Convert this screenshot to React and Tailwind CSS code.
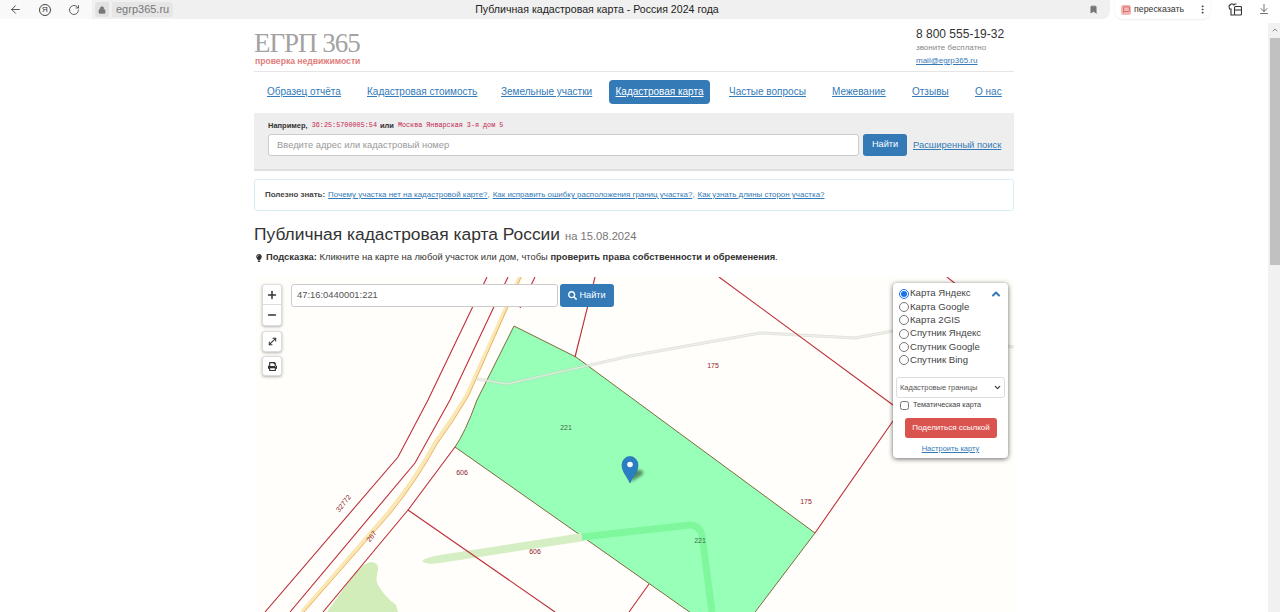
import { ArrowLeft, RotateCw, Lock, Bookmark, ArrowDownToLine, MoreVertical, ChevronUp, ChevronDown, Plus, Minus, MoveDiagonal, MessageSquare } from "lucide-react";
import { FaSearch, FaPrint, FaLightbulb } from "react-icons/fa";

const layers = ["Карта Яндекс", "Карта Google", "Карта 2GIS", "Спутник Яндекс", "Спутник Google", "Спутник Bing"];

function BrowserBar() {
  return (
    <div className="flex h-[23px] items-start bg-white text-[#333]">
      <div className="flex h-[19px] w-[92px] shrink-0 items-center bg-[#f9f9f9] pl-[9px]">
        <ArrowLeft size={13} strokeWidth={1.5} />
        <span className="ml-[17px] flex h-[12px] w-[12px] items-center justify-center rounded-full border border-[#444] text-[8px] leading-none">Я</span>
        <RotateCw size={12} strokeWidth={1.5} className="ml-[17px]" />
      </div>
      <div className="flex h-[19px] w-[1018px] items-center rounded-br-lg bg-[#f0f0f0] pl-[3px]">
        <span className="flex h-[15px] w-[14px] items-center justify-center rounded-l bg-[#e2e2e2]">
          <Lock size={8} fill="#777" stroke="#777" />
        </span>
        <span className="ml-[3px] rounded-r bg-[#e6e6e6] px-[4px] text-[11px] leading-[15px] text-[#777]">egrp365.ru</span>
        <span className="ml-[302px] w-[244px] shrink-0 whitespace-nowrap text-[10.6px] leading-[15px] text-[#222]">Публичная кадастровая карта - Россия 2024 года</span>
        <Bookmark size={9} fill="#777" stroke="#777" className="ml-[370px]" />
      </div>
      <div className="ml-[5px] flex h-[19px] w-[95px] items-center rounded-b-lg bg-white pl-[6px] shadow-[0_1px_2px_rgba(0,0,0,0.08)]">
        <span className="flex h-[10px] w-[10px] items-center justify-center rounded-[2px] bg-[#f2b8b5]">
          <MessageSquare size={7} stroke="#c0392b" />
        </span>
        <span className="ml-[3px] text-[8.8px] leading-none">пересказать</span>
        <MoreVertical size={11} className="ml-[13px]" />
      </div>
      {/* панель закладок: рубашка и лист */}
      <svg viewBox="0 0 14 13" className="ml-[18px] mt-[3px] h-[13px] w-[14px]" fill="none" stroke="#333" strokeWidth="1.1">
        <path d="M3 1 L1 3 L1.5 6 L3 6 L3 12 L6.5 12 M3 1 L5 1 Q5.5 3 7 1 L8.5 1" />
        <rect x="6.5" y="3.5" width="7" height="8.5" rx="1" />
        <path d="M6.5 7 H13.5" />
      </svg>
      <ArrowDownToLine size={12} strokeWidth={1.4} className="ml-[16px] mt-[3px]" />
    </div>
  );
}

function Header() {
  return (
    <div className="flex h-[49px] justify-between border-b border-[#e5e5e5]">
      <div>
        <div className="mt-[7px] font-['Liberation_Serif',serif] text-[27px] leading-[27px] tracking-[-1px] text-[#a3a3a3]">ЕГРП 365</div>
        <div className="ml-[1px] text-[8.6px] font-bold leading-[9px] text-[#e0807c]">проверка недвижимости</div>
      </div>
      <div className="w-[98px]">
        <div className="mt-[4px] text-[12px] leading-[15px] text-[#333]">8 800 555-19-32</div>
        <div className="text-[8px] leading-[11px] text-[#888]">звоните бесплатно</div>
        <a className="mt-[2px] block text-[8px] leading-[11px] text-[#337ab7] underline">mail@egrp365.ru</a>
      </div>
    </div>
  );
}

function Nav() {
  return (
    <div className="mt-[7px] flex h-[25px] items-center pl-[13px] text-[10px] text-[#337ab7] underline">
      <a className="w-[100px]">Образец отчёта</a>
      <a className="w-[134px]">Кадастровая стоимость</a>
      <a className="w-[108px]">Земельные участки</a>
      <a className="flex h-[24px] w-[101px] items-center justify-center rounded bg-[#337ab7] text-white">Кадастровая карта</a>
      <a className="ml-[19px] w-[103px]">Частые вопросы</a>
      <a className="w-[80px]">Межевание</a>
      <a className="w-[63px]">Отзывы</a>
      <a>О нас</a>
    </div>
  );
}

function SearchBox() {
  return (
    <div className="mt-[9px] h-[58px] border-b-2 border-[#e0e0e0] bg-[#eeeeee] px-[14px] pt-[8px]">
      <div className="flex items-center text-[7.5px] leading-[9px]">
        <b className="text-[#333]">Например,</b>
        <span className="ml-[4px] font-['Liberation_Mono',monospace] text-[6.8px] text-[#c7254e]">36:25:5700005:54</span>
        <b className="mx-[3px] text-[#333]">или</b>
        <span className="ml-[1px] font-['Liberation_Mono',monospace] text-[6.75px] text-[#c7254e]">Москва Январская 3-я дом 5</span>
      </div>
      <div className="mt-[4px] flex items-center">
        <div className="flex h-[22px] w-[591px] shrink-0 items-center rounded-[3px] border border-[#ccc] bg-white pl-[8px] text-[9.4px] text-[#999]">Введите адрес или кадастровый номер</div>
        <button className="ml-[4px] h-[22px] w-[44px] shrink-0 rounded-[3px] bg-[#337ab7] text-[9.2px] text-white">Найти</button>
        <a className="ml-[6px] whitespace-nowrap text-[9.4px] text-[#337ab7] underline">Расширенный поиск</a>
      </div>
    </div>
  );
}

function InfoBox() {
  return (
    <div className="mt-[8px] flex h-[32px] items-center rounded-[3px] border border-[#d9edf7] pl-[10px] text-[7.95px] text-[#337ab7]">
      <b className="mr-[3px] text-[#444]">Полезно знать:</b>
      <a className="underline">Почему участка нет на кадастровой карте?</a>,
      <a className="ml-[3px] underline">Как исправить ошибку расположения границ участка?</a>,
      <a className="ml-[3px] underline">Как узнать длины сторон участка?</a>
    </div>
  );
}

function MapDrawing() {
  const red = "#bd2f3a";
  const track = "M477 379 L507 384 L630 356 L760 333 L855 338 L893 331 L1014 347";
  return (
    <svg viewBox="254 277 760 335" className="block h-[335px] w-[760px]">
      <defs>
        <filter id="pin-shadow" x="-50%" y="-50%" width="200%" height="200%">
          <feGaussianBlur stdDeviation="1.6" />
        </filter>
      </defs>
      <rect x="254" y="277" width="760" height="335" fill="#fffefa" />
      {/* лес */}
      <path d="M327 612 L355 573 Q365 562 372 562 Q379 563 378 570 Q375 580 378 585 Q385 597 396 605 L398 612 Z" fill="#d2ecba" />
      {/* участок */}
      <path d="M514 326 L576 357 L815 533 L740 632 L718 632 L455 447 Q465 433 477 400 Z" fill="#98ffb8" stroke="#7d6a3e" strokeWidth="1" />
      {/* серая дорожка */}
      <path d={track} fill="none" stroke="#c6cabf" strokeOpacity="0.55" strokeWidth="3" />
      <path d={track} fill="none" stroke="#fffefa" strokeOpacity="0.45" strokeWidth="1.4" />
      {/* полевая дорога */}
      <path d="M422 561 Q424 558 440 555 L582 533 L584 541 L440 563 Q425 565 422 561 Z" fill="#d6eec4" />
      <path d="M582 537 L690 525 Q699 525 702 535 L712 612" fill="none" stroke="#7ff79c" strokeWidth="7" />
      {/* шоссе */}
      <path d="M302 612 L388 513 Q415 480 435 443 Q452 420 467 395 L520 277" fill="none" stroke="#fbe7b4" strokeWidth="4" />
      <path d="M304 612 L390 514 Q417 481 437 444 Q454 421 469 395 L521 277" fill="none" stroke="#e8b46c" strokeWidth="1" />
      {/* границы */}
      <g fill="none" stroke={red} strokeWidth="1.1">
        <path d="M265 612 L398 457 L428 400 L487 277" />
        <path d="M290 612 L415 463 L450 400 L508 277" />
        <path d="M323 612 L408 510 L455 447" />
        <path d="M520 308 L535 277" />
        <path d="M575 357 L595 277" />
        <path d="M719 277 L893 405" />
        <path d="M947 277 L957 285" />
        <path d="M815 533 L893 421 L920 380" />
        <path d="M408 510 L555 612" />
        <path d="M649 584 L629 612" />
      </g>
      {/* подписи */}
      <g fontFamily="Liberation Sans, sans-serif" fontSize="7" textAnchor="middle">
        <text x="713" y="368" fill="#8f1d2c">175</text>
        <text x="806" y="504" fill="#8f1d2c">175</text>
        <text x="566" y="430" fill="#3e6b4c">221</text>
        <text x="700" y="543" fill="#3e6b4c">221</text>
        <text x="462" y="475" fill="#8f1d2c">606</text>
        <text x="535" y="554" fill="#8f1d2c">606</text>
        <text x="343" y="506" fill="#8f1d2c" transform="rotate(-52 343 503)">32772</text>
        <text x="371" y="539" fill="#8f1d2c" transform="rotate(-52 371 536)">267</text>
      </g>
      {/* маркер */}
      <path d="M631 482 L642 475 Q645 471 640 470 L634 470 Z" fill="#000" opacity="0.45" filter="url(#pin-shadow)" />
      <path d="M630 483 C627 476 622 472 622 465 A8 8.5 0 0 1 638 465 C638 472 633 476 630 483 Z" fill="#2a7fc4" stroke="#2268a6" strokeWidth="0.6" />
      <circle cx="630" cy="464.5" r="2.8" fill="#fff" />
    </svg>
  );
}

function MapControls() {
  const box = "absolute left-[8px] flex w-[20px] items-center justify-center rounded-[3px] border border-[#ddd] bg-white text-[#333] shadow-[0_1px_3px_rgba(0,0,0,0.3)]";
  return (
    <>
      <div className={`${box} top-[7px] h-[42px] flex-col`}>
        <span className="flex h-[21px] w-full items-center justify-center border-b border-[#ddd]"><Plus size={12} strokeWidth={3} /></span>
        <span className="flex h-[21px] items-center justify-center"><Minus size={12} strokeWidth={3} /></span>
      </div>
      <div className={`${box} top-[54px] h-[21px]`}><MoveDiagonal size={11} strokeWidth={2.2} /></div>
      <div className={`${box} top-[79px] h-[20px]`}><FaPrint size={9} /></div>

      <div className="absolute left-[37px] top-[7px] flex">
        <div className="flex h-[23px] w-[267px] items-center rounded-[3px] border border-[#ccc] bg-white pl-[5px] text-[9.4px] text-[#555]">47:16:0440001:221</div>
        <button className="ml-[2px] flex h-[23px] w-[54px] items-center justify-center gap-[2px] rounded-[3px] bg-[#337ab7] text-[9.2px] text-white">
          <FaSearch size={9} />
          Найти
        </button>
      </div>

      <div className="absolute left-[639px] top-[6px] h-[175px] w-[115px] rounded-[4px] bg-white pl-[3px] pt-[4px] shadow-[0_1px_5px_rgba(0,0,0,0.6)]">
        <ChevronUp size={12} strokeWidth={4} className="absolute left-[97px] top-[5px] text-[#337ab7]" />
        {layers.map((l, i) => (
          <label key={l} className="flex h-[13.3px] items-center pl-[3px] text-[9.6px] text-[#444]">
            <input type="radio" name="layer" defaultChecked={i === 0} className="m-0 h-[10px] w-[10px] shrink-0 accent-[#1a73e8]" />
            <span className="ml-[1px] whitespace-nowrap">{l}</span>
          </label>
        ))}
        <div className="relative mt-[10px] flex h-[21px] w-[109px] items-center rounded-[3px] border border-[#ddd] pl-[3px] text-[7.5px] text-[#555]">
          Кадастровые границы
          <ChevronDown size={9} strokeWidth={3} className="absolute right-[2px] top-[5px] text-[#333]" />
        </div>
        <label className="ml-[4px] mt-[1px] flex h-[13px] items-center text-[7.3px] text-[#444]">
          <input type="checkbox" className="m-0 h-[9px] w-[9px]" />
          <span className="ml-[4px]">Тематическая карта</span>
        </label>
        <button className="ml-[9px] mt-[6px] h-[20px] w-[92px] rounded-[3px] bg-[#d9534f] text-[8px] text-white">Поделиться ссылкой</button>
        <a className="mt-[6px] block pr-[3px] text-center text-[7.5px] leading-[10px] text-[#337ab7] underline">Настроить карту</a>
      </div>
    </>
  );
}

export default function App() {
  return (
    <div className="h-screen overflow-hidden bg-white font-['Liberation_Sans',sans-serif]">
      <BrowserBar />
      <div className="flex">
        <div className="flex-1 pl-[254px]">
          <div className="w-[760px]">
            <Header />
            <Nav />
            <SearchBox />
            <InfoBox />
            <h1 className="mt-[10px] flex items-baseline text-[17.4px] leading-[26px] text-[#333]">
              Публичная кадастровая карта России
              <small className="ml-[5px] text-[11.2px] text-[#777]">на 15.08.2024</small>
            </h1>
            <p className="flex h-[17px] items-center text-[9.35px] text-[#333]">
              <FaLightbulb size={8} className="ml-[1px] mr-[3px]" />
              <b>Подсказка:</b>&nbsp;Кликните на карте на любой участок или дом, чтобы&nbsp;<b>проверить права собственности и обременения</b>.
            </p>
            <div className="relative mt-[11px]">
              <MapDrawing />
              <MapControls />
            </div>
          </div>
        </div>
        <div className="relative h-[589px] w-[12px] shrink-0 bg-[#f1f1f1]">
          <ChevronUp size={8} strokeWidth={3} className="absolute left-[3px] top-[3px] text-[#888]" />
          <div className="ml-[2px] mt-[15px] h-[227px] w-[10px] bg-[#c1c1c1]" />
        </div>
      </div>
    </div>
  );
}
